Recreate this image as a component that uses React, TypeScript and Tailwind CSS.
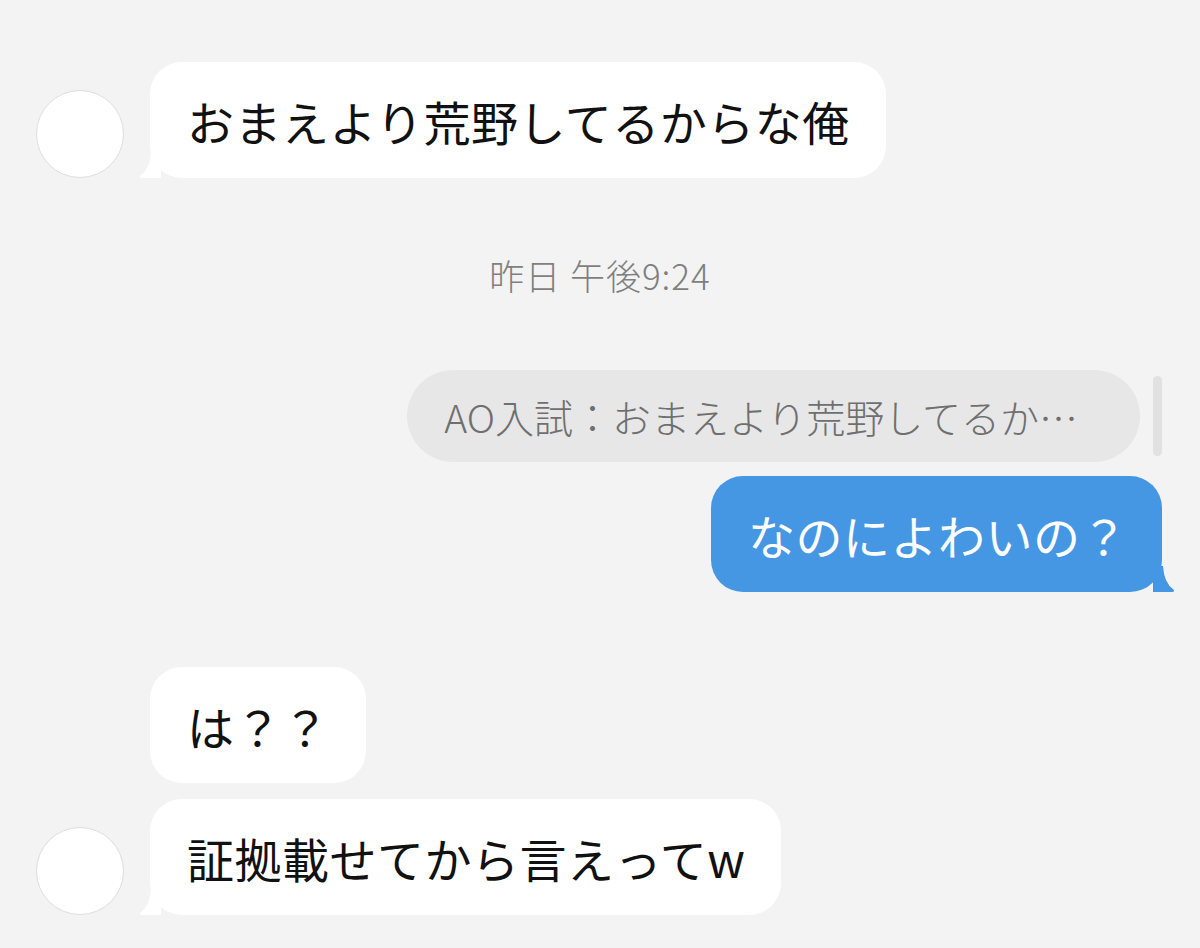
const font = { fontFamily: '"Noto Sans CJK JP", "Noto Sans", sans-serif' };

function Avatar() {
  return <div className="w-[88px] h-[88px] shrink-0 rounded-full bg-white border border-[#dedede]" />;
}

function LeftTail() {
  return (
    <svg className="absolute -left-[11px] bottom-0" width="22" height="26" viewBox="0 0 22 26">
      <path d="M22 0 L22 26 L3 26 Q0 26 1.5 23.5 Q11 17 12 0 Z" fill="#ffffff" />
    </svg>
  );
}

function RightTail() {
  return (
    <svg className="absolute -right-[13px] bottom-0" width="22" height="26" viewBox="0 0 22 26">
      <path d="M0 0 L0 26 L19 26 Q22 26 20.5 23.5 Q11 17 10 0 Z" fill="#4596e3" />
    </svg>
  );
}

function Incoming({ text, avatar, tail }: { text: string; avatar?: boolean; tail?: boolean }) {
  return (
    <div className="flex items-end gap-[26px] pl-[36px]">
      {avatar ? <Avatar /> : <div className="w-[88px] shrink-0" />}
      <div className="relative bg-white rounded-[32px] h-[116px] flex items-center pl-[37px] pr-[36px]">
        {tail && <LeftTail />}
        <span className="text-[47px] leading-none text-[#111] tracking-[0.5px]">{text}</span>
      </div>
    </div>
  );
}

export default function App() {
  return (
    <div className="w-[1200px] h-[948px] bg-[#f3f3f3] overflow-hidden pt-[62px]" style={font}>
      <Incoming text="おまえより荒野してるからな俺" avatar tail />

      <div className="mt-[77px] text-center text-[35px] leading-[40px] font-light text-[#7f7f7f] tracking-[1px]">
        昨日 午後9:24
      </div>

      <div className="mt-[75px] flex justify-end items-center pr-[38px] gap-[13px]">
        <div className="bg-[#e7e7e7] rounded-[46px] h-[92px] flex items-center pl-[37px] pr-[62px]">
          <span className="text-[39px] leading-none font-light text-[#6f6f6f]">AO入試：おまえより荒野してるか…</span>
        </div>
        <div className="w-[9px] h-[80px] rounded-full bg-[#e1e1e1]" />
      </div>

      <div className="mt-[14px] flex justify-end pr-[38px]">
        <div className="relative bg-[#4596e3] rounded-[32px] h-[116px] flex items-center pl-[37px] pr-[34px]">
          <RightTail />
          <span className="text-[47px] leading-none text-white tracking-[0.5px]">なのによわいの？</span>
        </div>
      </div>

      <div className="mt-[75px]">
        <Incoming text="は？？" />
      </div>
      <div className="mt-[16px]">
        <Incoming text="証拠載せてから言えってw" avatar tail />
      </div>
    </div>
  );
}
